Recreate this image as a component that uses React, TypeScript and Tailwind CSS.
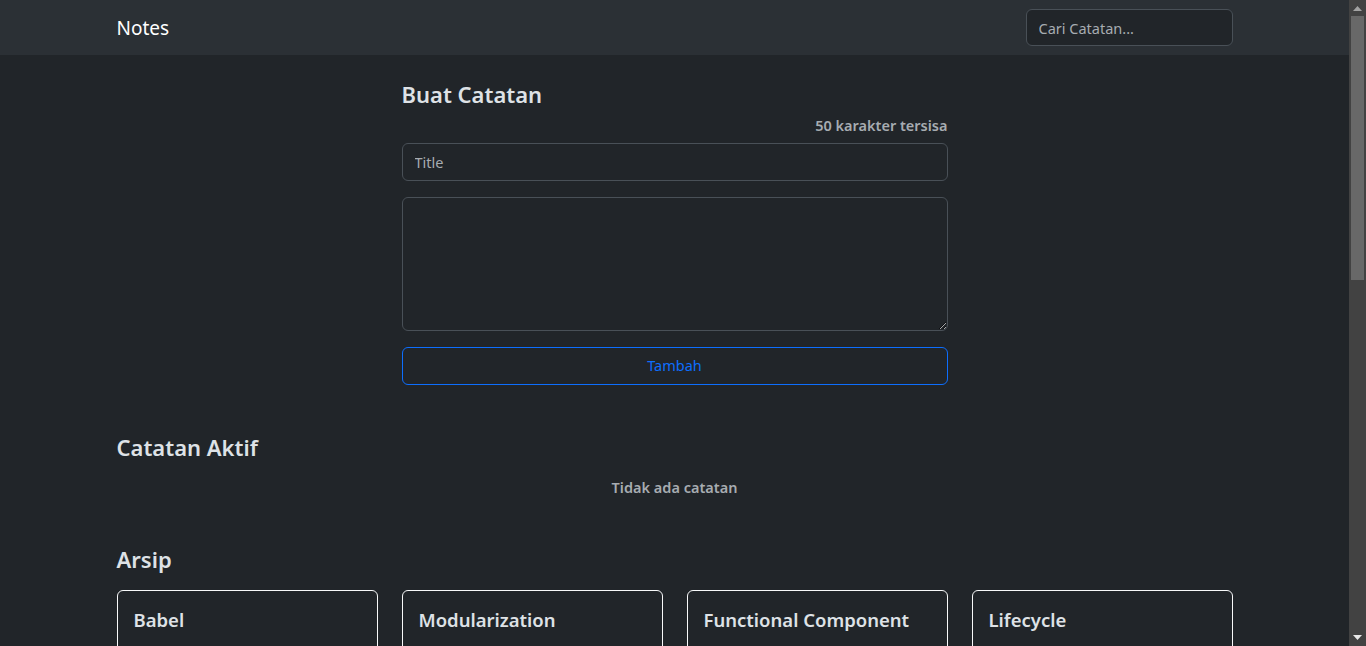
import React from 'react'

const archived = ['Babel', 'Modularization', 'Functional Component', 'Lifecycle', 'ESM', 'Module Bundler']

function Scrollbar() {
  return (
    <div className="flex h-full w-[17px] shrink-0 flex-col items-center bg-[#424242]">
      <div className="flex h-[16px] w-full items-center justify-center">
        <svg width="9" height="5" viewBox="0 0 9 5">
          <path d="M0 5 L4.5 0 L9 5 Z" fill="#a3a3a3" />
        </svg>
      </div>
      <div className="h-[264px] w-[13px] bg-[#686868]" />
      <div className="flex-1" />
      <div className="flex h-[17px] w-full items-center justify-center">
        <svg width="9" height="5" viewBox="0 0 9 5">
          <path d="M0 0 L9 0 L4.5 5 Z" fill="#e8e8e8" />
        </svg>
      </div>
    </div>
  )
}

export default function App() {
  return (
    <div
      className="flex h-[646px] overflow-hidden bg-[#212529] text-[#dee2e6]"
      style={{ fontFamily: '"Noto Sans", "Open Sans", sans-serif' }}
    >
      <div className="h-full flex-1 overflow-hidden">
        <nav className="h-[55px] bg-[#2b3035]">
          <div className="mx-auto flex h-full max-w-[1140px] items-center justify-between px-3">
            <span className="pt-[2px] text-[19px] leading-none text-white">Notes</span>
            <input
              type="text"
              placeholder="Cari Catatan..."
              className="h-[37px] w-[207px] rounded-md border border-[#495057] bg-[#212529] px-3 text-[14.5px] text-[#dee2e6] placeholder:text-[#a7acb1] focus:outline-none"
            />
          </div>
        </nav>

        <main className="mx-auto max-w-[1140px] px-3">
          <section className="mx-auto w-[546px] pt-[26px]">
            <h2 className="text-[22px] font-semibold leading-[27px]">Buat Catatan</h2>
            <p className="mt-[7px] text-right text-[14.5px] font-semibold leading-[20px] text-[#a7acb1]">
              50 karakter tersisa
            </p>
            <input
              type="text"
              placeholder="Title"
              className="mt-[8px] block h-[38px] w-full rounded-md border border-[#495057] bg-[#212529] px-3 text-[14.5px] placeholder:text-[#a7acb1] focus:outline-none"
            />
            <textarea className="mt-4 block h-[134px] w-full rounded-md border border-[#495057] bg-[#212529] px-3 py-2 text-[14.5px] focus:outline-none" />
            <button
              type="button"
              className="mt-4 block h-[38px] w-full rounded-md border border-[#0d6efd] text-[14.5px] text-[#0d6efd]"
            >
              Tambah
            </button>
          </section>

          <section className="mt-[49px]">
            <h2 className="text-[22px] font-semibold leading-[27px]">Catatan Aktif</h2>
            <p className="mt-[16px] text-center text-[14.5px] font-semibold leading-[20px] text-[#a7acb1]">
              Tidak ada catatan
            </p>
          </section>

          <section className="mt-[49px]">
            <h2 className="text-[22px] font-semibold leading-[27px]">Arsip</h2>
            <div className="mt-[17px] grid grid-cols-4 gap-6">
              {archived.map(title => (
                <div key={title} className="h-[220px] rounded-md border border-[#f8f9fa] p-4">
                  <h3 className="pt-[1px] text-[18.5px] font-semibold leading-[24px]">{title}</h3>
                </div>
              ))}
            </div>
          </section>
        </main>
      </div>
      <Scrollbar />
    </div>
  )
}
